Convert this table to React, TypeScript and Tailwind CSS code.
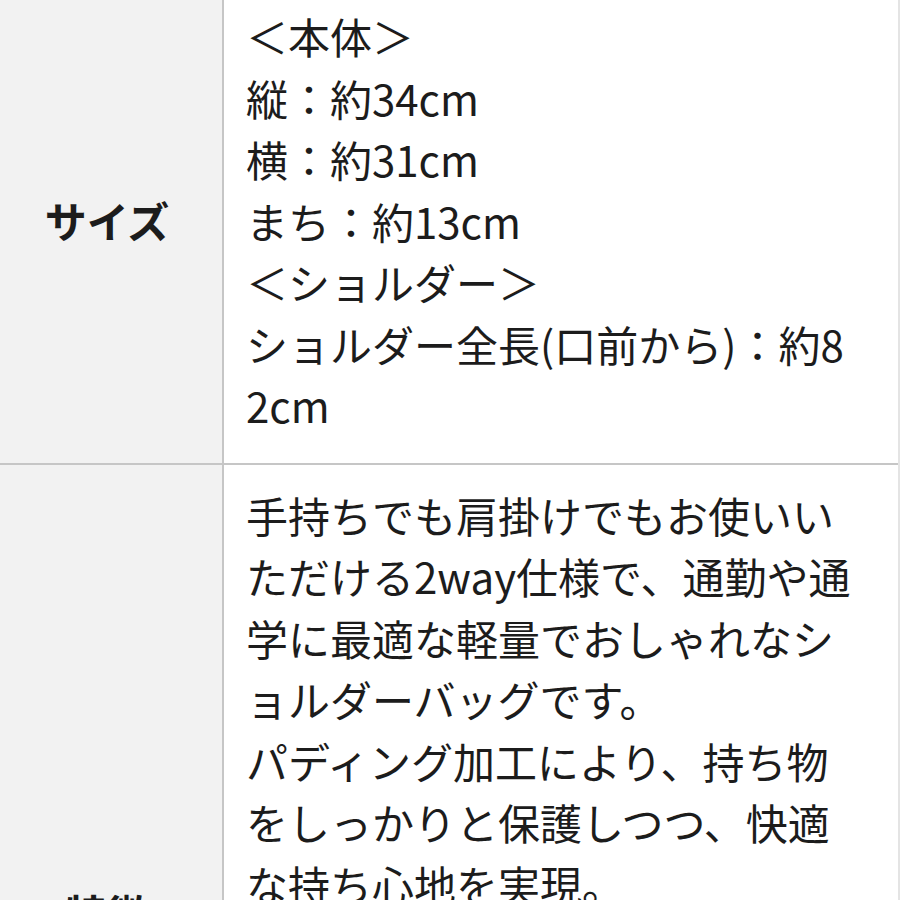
import React from "react";

const rows = [
  {
    label: "サイズ",
    lines: [
      "＜本体＞",
      "縦：約34cm",
      "横：約31cm",
      "まち：約13cm",
      "＜ショルダー＞",
      "ショルダー全長(口前から)：約8",
      "2cm",
    ],
    minH: "",
  },
  {
    label: "特徴",
    lines: [
      "手持ちでも肩掛けでもお使いい",
      "ただける2way仕様で、通勤や通",
      "学に最適な軽量でおしゃれなシ",
      "ョルダーバッグです。",
      "パディング加工により、持ち物",
      "をしっかりと保護しつつ、快適",
      "な持ち心地を実現。",
    ],
    minH: "min-h-[908px]",
  },
];

export default function App() {
  return (
    <div
      className="h-[900px] w-[900px] overflow-hidden bg-white text-[#1c1c1c]"
      style={{ fontFamily: '"Noto Sans CJK JP", "Noto Sans", sans-serif' }}
    >
      <div className="mt-[-14px] border-r-2 border-[#e4e4e4]">
        {rows.map((row) => (
          <div
            key={row.label}
            className={`grid grid-cols-[224px_1fr] border-b-2 border-[#c6c6c6] ${row.minH}`}
          >
            <div className="flex items-center justify-center border-r-2 border-[#c6c6c6] bg-[#f2f2f2] pr-2 pb-[10px]">
              <span className="text-[42px] font-bold">{row.label}</span>
            </div>
            <div className="pt-[19px] pb-[27px] pl-[22px] text-[42px] leading-[61.5px]">
              {row.lines.map((line, i) => (
                <div key={i} className="whitespace-nowrap">
                  {line}
                </div>
              ))}
            </div>
          </div>
        ))}
      </div>
    </div>
  );
}
